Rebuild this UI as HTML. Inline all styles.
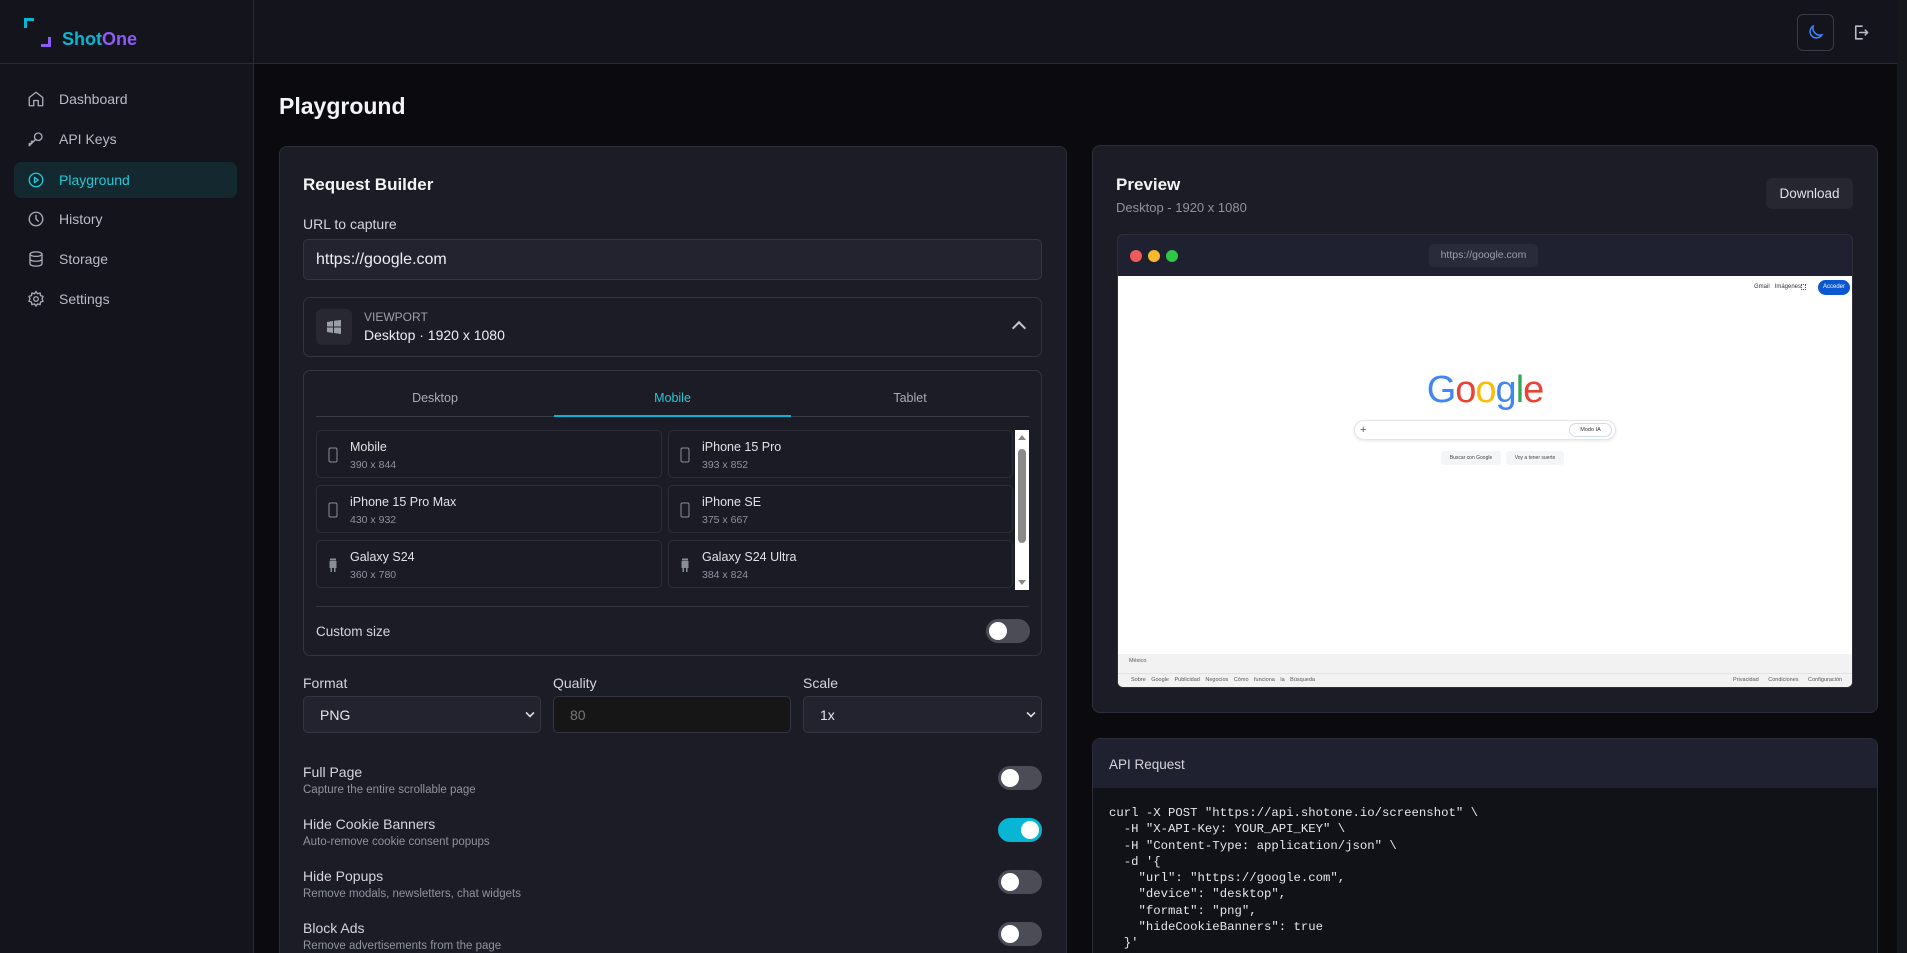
<!DOCTYPE html>
<html><head><meta charset="utf-8"><style>
*{box-sizing:border-box;margin:0;padding:0}
html,body{width:1907px;height:953px;overflow:hidden}
body{background:#0b0b0f;font-family:"Liberation Sans",sans-serif;color:#e5e7eb;position:relative}
.abs{position:absolute}
.side{left:0;top:0;width:254px;height:953px;background:#14151c;border-right:1px solid #2a2b33}
.top{left:254px;top:0;width:1643px;height:64px;background:#14151c;border-bottom:1px solid #2a2b33}
.hline{left:0;top:63px;width:254px;height:1px;background:#2a2b33}
.nav{left:14px;width:223px;height:36px;border-radius:7px;display:flex;align-items:center;padding-left:13px;font-size:14px;color:#b8bcc6}
.nav svg{width:18px;height:18px;margin-right:14px;fill:none;stroke:#a8acb6;stroke-width:1.8;stroke-linecap:round;stroke-linejoin:round}
.nav.act{background:#13292f;color:#22c8d8}.nav.act svg{stroke:#22c8d8}
.card{background:#1b1c26;border:1px solid #2c2d38;border-radius:8px}
.lbl{font-size:14px;color:#d4d6dc}
.sm{font-size:11.5px;color:#8f939e}
.tog{width:44px;height:24px;border-radius:12px;background:#4b4c55}
.tog::after{content:"";position:absolute;left:3px;top:3px;width:18px;height:18px;border-radius:50%;background:#fff}
.tog.on{background:#06b6d4}.tog.on::after{left:23px}
.dev{border:1px solid #2c2d38;border-radius:5px;background:#1a1b24;height:48px}
.dev .n{position:absolute;left:33px;top:9px;font-size:12.5px;color:#e0e2e6}
.dev .d{position:absolute;left:33px;top:28px;font-size:10.5px;color:#8f939e}
.dev svg{position:absolute;left:11px;top:16px;width:10px;height:16px}
.sel{height:37px;border:1px solid #34353f;border-radius:5px;background:#22232e;font-size:14px;color:#e5e7eb;padding-left:16px;display:flex;align-items:center}
.sel .ch{position:absolute;right:6px;top:12px;width:8px;height:8px;border-right:2px solid #ddd;border-bottom:2px solid #ddd;transform:rotate(45deg) scale(.8)}
pre{font-family:"Liberation Mono",monospace;font-size:12.3px;line-height:16.3px;color:#e5e7eb}
</style></head><body>
<div class="abs side"></div>
<div class="abs hline"></div>
<div class="abs top"></div>
<div class="abs" style="left:1897px;top:0;width:10px;height:953px;background:#16171c"></div>
<!-- logo -->
<div class="abs" style="left:24px;top:18px;width:10px;height:10px;border-left:3px solid #06b6d4;border-top:3px solid #06b6d4"></div>
<div class="abs" style="left:41px;top:37px;width:10px;height:10px;border-right:3px solid #8b5cf6;border-bottom:3px solid #8b5cf6"></div>
<div class="abs" style="left:62px;top:28px;font-size:18px;font-weight:bold;line-height:22px"><span style="color:#06b6d4">Shot</span><span style="color:#8b5cf6">One</span></div>
<!-- nav -->
<div class="abs nav" style="top:81px"><svg viewBox="0 0 24 24"><path d="M3 10l9-7 9 7v10a1 1 0 0 1-1 1h-5v-7H9v7H4a1 1 0 0 1-1-1z"/></svg>Dashboard</div>
<div class="abs nav" style="top:121px"><svg viewBox="0 0 24 24"><circle cx="15" cy="9" r="5"/><path d="M11.5 12.5L3 21v-3h3v-3h3l2.5-2.5"/></svg>API Keys</div>
<div class="abs nav act" style="top:162px"><svg viewBox="0 0 24 24"><circle cx="12" cy="12" r="9"/><path d="M10 8.5l5 3.5-5 3.5z"/></svg>Playground</div>
<div class="abs nav" style="top:201px"><svg viewBox="0 0 24 24"><circle cx="12" cy="12" r="9"/><path d="M12 7v5l3 3"/></svg>History</div>
<div class="abs nav" style="top:241px"><svg viewBox="0 0 24 24"><ellipse cx="12" cy="5.5" rx="8" ry="3"/><path d="M4 5.5v13c0 1.7 3.6 3 8 3s8-1.3 8-3v-13M4 12c0 1.7 3.6 3 8 3s8-1.3 8-3"/></svg>Storage</div>
<div class="abs nav" style="top:281px"><svg viewBox="0 0 24 24"><circle cx="12" cy="12" r="3"/><path d="M12 2l2 3 3.5-1 .5 3.5 3.5 1-1.5 3.5 1.5 3-3.5 1-.5 3.5-3.5-1-2 3-2-3-3.5 1-.5-3.5-3.5-1 1.5-3.5L2.5 8.5l3.5-1L6.5 4 10 5z"/></svg>Settings</div>
<!-- header buttons -->
<div class="abs" style="left:1797px;top:14px;width:37px;height:37px;border:1px solid #3a3b45;border-radius:6px"></div>
<svg class="abs" style="left:1806px;top:23px" width="19" height="19" viewBox="0 0 24 24" fill="none" stroke="#3b82f6" stroke-width="2" stroke-linecap="round"><path d="M20 15A9 9 0 0 1 9 4a8 8 0 1 0 11 11z"/></svg>
<svg class="abs" style="left:1851px;top:23px" width="19" height="19" viewBox="0 0 24 24" fill="none" stroke="#b8bcc6" stroke-width="2" stroke-linecap="round" stroke-linejoin="round"><path d="M14 4H6v16h8M11 12h10M18 9l3 3-3 3"/></svg>
<!-- title -->
<div class="abs" style="left:279px;top:93px;font-size:23px;font-weight:bold;color:#f3f4f6">Playground</div>
<!-- left card -->
<div class="abs card" style="left:279px;top:146px;width:788px;height:820px"></div>
<div class="abs" style="left:303px;top:175px;font-size:17px;font-weight:bold;color:#f3f4f6">Request Builder</div>
<div class="abs lbl" style="left:303px;top:216px">URL to capture</div>
<div class="abs" style="left:303px;top:239px;width:739px;height:41px;border:1px solid #34353f;border-radius:5px;background:#22232e;font-size:16px;padding:11px 12px;color:#eceef2">https://google.com</div>
<div class="abs" style="left:303px;top:297px;width:739px;height:60px;border:1px solid #34353f;border-radius:7px"></div>
<div class="abs" style="left:316px;top:309px;width:36px;height:36px;border-radius:6px;background:#272832"></div>
<svg class="abs" style="left:326px;top:319px" width="16" height="16" viewBox="0 0 16 16" fill="#9a9ea8"><path d="M1 3l6-1v5.5H1zM8 1.8L15 1v6.5H8zM1 8.5h6V14l-6-1zM8 8.5h7V15l-7-1z"/></svg>
<div class="abs" style="left:364px;top:310px;font-size:12px;color:#9ca0aa">VIEWPORT</div>
<div class="abs" style="left:364px;top:327px;font-size:14px;color:#eceef2">Desktop · 1920 x 1080</div>
<div class="abs" style="left:1014px;top:323px;width:10px;height:10px;border-left:2px solid #c4c7cf;border-top:2px solid #c4c7cf;transform:rotate(45deg)"></div>
<!-- device box -->
<div class="abs" style="left:303px;top:370px;width:739px;height:286px;border:1px solid #34353f;border-radius:7px"></div>
<div class="abs" style="left:316px;top:391px;width:238px;text-align:center;font-size:12.5px;color:#a8acb6">Desktop</div>
<div class="abs" style="left:554px;top:391px;width:237px;text-align:center;font-size:12.5px;color:#22c8d8">Mobile</div>
<div class="abs" style="left:791px;top:391px;width:238px;text-align:center;font-size:12.5px;color:#a8acb6">Tablet</div>
<div class="abs" style="left:316px;top:416px;width:713px;height:1px;background:#3a3b45"></div>
<div class="abs" style="left:554px;top:415px;width:237px;height:2px;background:#06b6d4"></div>
<div class="abs dev" style="left:316px;top:430px;width:346px"><svg viewBox="0 0 10 16" fill="none" stroke="#8a8e98"><rect x="1" y="1" width="8" height="14" rx="1.5"/></svg><div class="n">Mobile</div><div class="d">390 x 844</div></div>
<div class="abs dev" style="left:668px;top:430px;width:345px"><svg viewBox="0 0 10 16" fill="none" stroke="#8a8e98"><rect x="1" y="1" width="8" height="14" rx="1.5"/></svg><div class="n">iPhone 15 Pro</div><div class="d">393 x 852</div></div>
<div class="abs dev" style="left:316px;top:485px;width:346px"><svg viewBox="0 0 10 16" fill="none" stroke="#8a8e98"><rect x="1" y="1" width="8" height="14" rx="1.5"/></svg><div class="n">iPhone 15 Pro Max</div><div class="d">430 x 932</div></div>
<div class="abs dev" style="left:668px;top:485px;width:345px"><svg viewBox="0 0 10 16" fill="none" stroke="#8a8e98"><rect x="1" y="1" width="8" height="14" rx="1.5"/></svg><div class="n">iPhone SE</div><div class="d">375 x 667</div></div>
<div class="abs dev" style="left:316px;top:540px;width:346px"><svg viewBox="0 0 10 16" fill="#8a8e98"><rect x="1.5" y="4" width="7" height="7"/><rect x="2.5" y="11" width="1.5" height="4"/><rect x="6" y="11" width="1.5" height="4"/><rect x="2" y="1.5" width="6" height="2"/></svg><div class="n">Galaxy S24</div><div class="d">360 x 780</div></div>
<div class="abs dev" style="left:668px;top:540px;width:345px"><svg viewBox="0 0 10 16" fill="#8a8e98"><rect x="1.5" y="4" width="7" height="7"/><rect x="2.5" y="11" width="1.5" height="4"/><rect x="6" y="11" width="1.5" height="4"/><rect x="2" y="1.5" width="6" height="2"/></svg><div class="n">Galaxy S24 Ultra</div><div class="d">384 x 824</div></div>
<div class="abs" style="left:1015px;top:430px;width:14px;height:160px;background:#fff"></div>
<div class="abs" style="left:1018px;top:449px;width:8px;height:94px;border-radius:4px;background:#8a8a8a"></div>
<div class="abs" style="left:1018px;top:435px;width:0;height:0;border:4px solid transparent;border-bottom:5px solid #888;border-top:0"></div>
<div class="abs" style="left:1018px;top:580px;width:0;height:0;border:4px solid transparent;border-top:5px solid #888;border-bottom:0"></div>
<div class="abs" style="left:316px;top:606px;width:713px;height:1px;background:#33343e"></div>
<div class="abs lbl" style="left:316px;top:624px;font-size:13.5px">Custom size</div>
<div class="abs tog" style="left:986px;top:619px"></div>
<!-- format row -->
<div class="abs lbl" style="left:303px;top:675px">Format</div>
<div class="abs lbl" style="left:553px;top:675px">Quality</div>
<div class="abs lbl" style="left:803px;top:675px">Scale</div>
<div class="abs sel" style="left:303px;top:696px;width:238px">PNG<div class="ch"></div></div>
<div class="abs sel" style="left:553px;top:696px;width:238px;background:#161616;color:#777">80</div>
<div class="abs sel" style="left:803px;top:696px;width:239px">1x<div class="ch"></div></div>
<!-- toggles -->
<div class="abs lbl" style="left:303px;top:764px">Full Page</div><div class="abs sm" style="left:303px;top:784px">Capture the entire scrollable page</div><div class="abs tog" style="left:998px;top:766px"></div>
<div class="abs lbl" style="left:303px;top:816px">Hide Cookie Banners</div><div class="abs sm" style="left:303px;top:836px">Auto-remove cookie consent popups</div><div class="abs tog on" style="left:998px;top:818px"></div>
<div class="abs lbl" style="left:303px;top:868px">Hide Popups</div><div class="abs sm" style="left:303px;top:888px">Remove modals, newsletters, chat widgets</div><div class="abs tog" style="left:998px;top:870px"></div>
<div class="abs lbl" style="left:303px;top:920px">Block Ads</div><div class="abs sm" style="left:303px;top:940px">Remove advertisements from the page</div><div class="abs tog" style="left:998px;top:922px"></div>
<!-- preview card -->
<div class="abs card" style="left:1092px;top:145px;width:786px;height:568px"></div>
<div class="abs" style="left:1116px;top:175px;font-size:17px;font-weight:bold;color:#f3f4f6">Preview</div>
<div class="abs" style="left:1116px;top:200px;font-size:13px;color:#8f939e">Desktop - 1920 x 1080</div>
<div class="abs" style="left:1766px;top:178px;width:87px;height:31px;border-radius:6px;background:#262731;font-size:13.5px;color:#dfe1e6;text-align:center;line-height:31px">Download</div>
<div class="abs" style="left:1117px;top:234px;width:736px;height:454px;border:1px solid #2e2f3a;border-radius:6px;background:#1f2030;overflow:hidden">
 <div class="abs" style="left:12px;top:15px;width:12px;height:12px;border-radius:50%;background:#f05a5a"></div>
 <div class="abs" style="left:30px;top:15px;width:12px;height:12px;border-radius:50%;background:#f5b82e"></div>
 <div class="abs" style="left:48px;top:15px;width:12px;height:12px;border-radius:50%;background:#2ec748"></div>
 <div class="abs" style="left:311px;top:9px;width:109px;height:23px;border-radius:5px;background:#2a2b3a;font-size:10.5px;color:#9a9eaa;text-align:center;line-height:23px">https://google.com</div>
 <div class="abs" style="left:0;top:41px;width:736px;height:413px;background:#fff">
  <div class="abs" style="left:636px;top:8px;font-size:6px;color:#333">Gmail&nbsp;&nbsp;&nbsp;Imágenes</div>
  <div class="abs" style="left:683px;top:8px;width:5px;height:6px;border:1px dotted #555"></div>
  <div class="abs" style="left:700px;top:4px;width:32px;height:15px;border-radius:8px;background:#0b57d0;font-size:6px;color:#fff;text-align:center;line-height:15px">Acceder</div>
  <div class="abs" style="left:0;top:92px;width:734px;text-align:center;font-size:38px;letter-spacing:-1px;line-height:44px"><span style="color:#4285f4">G</span><span style="color:#ea4335">o</span><span style="color:#fbbc05">o</span><span style="color:#4285f4">g</span><span style="color:#34a853">l</span><span style="color:#ea4335">e</span></div>
  <div class="abs" style="left:236px;top:144px;width:262px;height:20px;border:1px solid #e5e5e5;border-radius:10px;box-shadow:0 1px 3px rgba(0,0,0,.1)">
   <div class="abs" style="left:5px;top:2px;font-size:11px;color:#555;line-height:14px">+</div>
   <div class="abs" style="left:214px;top:2px;width:43px;height:14px;border:1px solid #cde;border-radius:7px;font-size:5.5px;color:#333;line-height:12px;text-align:center">Modo IA</div>
  </div>
  <div class="abs" style="left:323px;top:175px;width:60px;height:14px;background:#f4f5f7;border-radius:3px;font-size:5px;color:#444;text-align:center;line-height:14px">Buscar con Google</div>
  <div class="abs" style="left:388px;top:175px;width:58px;height:14px;background:#f4f5f7;border-radius:3px;font-size:5px;color:#444;text-align:center;line-height:14px">Voy a tener suerte</div>
  <div class="abs" style="left:0;top:378px;width:736px;height:35px;background:#f2f2f2">
   <div class="abs" style="left:11px;top:4px;font-size:5.5px;color:#555">México</div>
   <div class="abs" style="left:0;top:19px;width:736px;height:1px;background:#e2e2e2"></div>
   <div class="abs" style="left:13px;top:23px;font-size:5.5px;color:#555;word-spacing:4px">Sobre&nbsp;Google Publicidad Negocios Cómo&nbsp;funciona&nbsp;la&nbsp;Búsqueda</div>
   <div class="abs" style="right:12px;top:23px;font-size:5.5px;color:#555;word-spacing:8px">Privacidad Condiciones Configuración</div>
  </div>
 </div>
</div>
<!-- API card -->
<div class="abs" style="left:1092px;top:738px;width:786px;height:225px;border:1px solid #2c2d38;border-radius:8px;background:#111218;overflow:hidden">
 <div style="height:49px;background:#1f2030;font-size:13.5px;color:#d4d6dc;padding:18px 0 0 16px">API Request</div>
 <pre style="position:absolute;left:16px;top:66px">curl -X POST "https://api.shotone.io/screenshot" \
  -H "X-API-Key: YOUR_API_KEY" \
  -H "Content-Type: application/json" \
  -d '{
    "url": "https://google.com",
    "device": "desktop",
    "format": "png",
    "hideCookieBanners": true
  }'</pre>
</div>
</body></html>
